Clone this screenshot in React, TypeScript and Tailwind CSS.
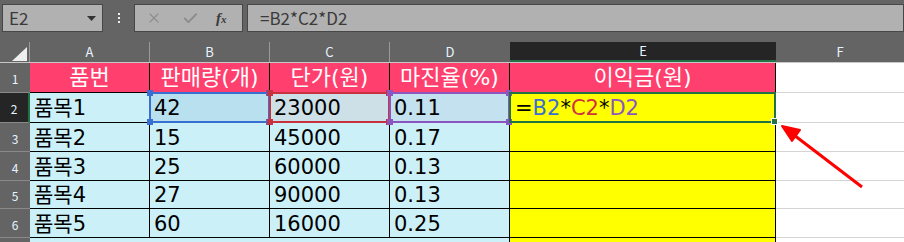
import { X, Check } from 'lucide-react';

const FONT = { fontFamily: '"Noto Sans CJK KR", "Noto Sans", sans-serif' };
const CELL_FONT = { fontFamily: '"DejaVu Sans", "Noto Sans CJK KR", sans-serif' };

const COLS = ['A', 'B', 'C', 'D', 'E', 'F'];
const HEAD = ['품번', '판매량(개)', '단가(원)', '마진율(%)', '이익금(원)'];
const ROWS = [
  ['품목1', '42', '23000', '0.11'],
  ['품목2', '15', '45000', '0.17'],
  ['품목3', '25', '60000', '0.13'],
  ['품목4', '27', '90000', '0.13'],
  ['품목5', '60', '16000', '0.25'],
];
const ROW_H = ['h-[30px]', 'h-[30px]', 'h-[29px]', 'h-[29px]', 'h-[28px]', 'h-[29px]'];

// fill for the referenced cells on row 2
const REF_FILL: Record<number, string> = { 1: 'bg-[#b9e0ef]', 2: 'bg-[#cde0e7]', 3: 'bg-[#c4e1ef]' };

function RefBox({ left, width, color }: { left: number; width: number; color: string }) {
  return (
    <div className="absolute top-[92px] h-[31px] pointer-events-none" style={{ left, width }}>
      <div className="absolute inset-0 border-2" style={{ borderColor: color }} />
      <div className="absolute -left-[2px] -top-[2px] w-[6px] h-[6px]" style={{ background: color }} />
      <div className="absolute -right-[2px] -top-[2px] w-[6px] h-[6px]" style={{ background: color }} />
      <div className="absolute -left-[2px] -bottom-[2px] w-[6px] h-[6px]" style={{ background: color }} />
      <div className="absolute -right-[2px] -bottom-[2px] w-[6px] h-[6px]" style={{ background: color }} />
    </div>
  );
}

export default function App() {
  return (
    <div className="relative w-[904px] h-[242px] overflow-hidden bg-white" style={FONT}>
      {/* ── Formula bar ─────────────────────────── */}
      <div className="h-[42px] bg-[#646464] flex items-start pt-[4px] pl-[2px]">
        <div className="w-[101px] h-[28px] bg-[#b1b1b1] border border-[#474747] flex items-center pl-[6px] pr-[6px]">
          <span className="flex-1 text-[17px] text-[#3a3a3a]">E2</span>
          <svg width="9" height="5" viewBox="0 0 9 5"><path d="M0 0h9L4.5 5z" fill="#333" /></svg>
        </div>
        <div className="w-[31px] h-[28px] flex flex-col items-center justify-center gap-[2px]">
          <div className="w-[2px] h-[2px] bg-[#eee]" />
          <div className="w-[2px] h-[2px] bg-[#eee]" />
          <div className="w-[2px] h-[2px] bg-[#eee]" />
        </div>
        <div className="w-[109px] h-[28px] bg-[#b1b1b1] border border-[#474747] flex items-center pl-[11px]">
          <X size={16} strokeWidth={1.6} className="text-[#8c8c8c]" />
          <Check size={17} strokeWidth={2.6} className="ml-[20px] text-[#8c8c8c]" />
          <span className="ml-[17px] text-[15px] italic font-bold text-[#3a3a3a]" style={{ fontFamily: '"Liberation Serif", serif' }}>
            f<span className="text-[11px]">x</span>
          </span>
        </div>
        <div className="ml-[4px] flex-1 h-[28px] bg-[#b1b1b1] border border-[#474747] flex items-center pl-[12px]">
          <span className="text-[17px] text-[#3a3a3a]">=B2*C2*D2</span>
        </div>
      </div>

      {/* ── Column headers ─────────────────────── */}
      <div className="flex h-[21px] bg-[#646464] border-b border-[#c8c8c8]">
        <div className="w-[30px] shrink-0 border-r border-[#9a9a9a] relative">
          <svg className="absolute left-[12px] top-[5px]" width="15" height="14" viewBox="0 0 15 14">
            <path d="M15 0V14H0z" fill="#efefef" />
          </svg>
        </div>
        {COLS.map((c, i) => (
          <div key={c}
            className={`flex items-center justify-center text-[13px] text-[#e8f4ff] ${
              c === 'E'
                ? 'w-[266px] bg-[#252525] border-b-2 border-[#217346]'
                : c === 'F' ? 'flex-1' : 'w-[120px] border-r border-[#9a9a9a]'
            } ${i === 3 ? 'border-r-0' : ''}`}>
            {c}
          </div>
        ))}
      </div>

      {/* ── Grid body ──────────────────────────── */}
      {[0, 1, 2, 3, 4, 5].map(r => (
        <div key={r} className={`flex ${ROW_H[r]}`}>
          <div className={`w-[30px] shrink-0 flex items-center justify-center pt-[3px] text-[12px] text-[#e8f4ff] border-b border-[#8a8a8a] ${
            r === 1 ? 'bg-[#252525] border-r-2 border-r-[#217346]' : 'bg-[#646464]'
          }`}>
            {r + 1}
          </div>
          {r === 0
            ? HEAD.map((h, i) => (
              <div key={h} style={CELL_FONT}
                className={`${i === 4 ? 'w-[266px]' : 'w-[120px]'} bg-[#ff3f6e] border-r border-b border-black flex items-center justify-center text-white text-[22px]`}>
                {h}
              </div>
            ))
            : (
              <>
                {ROWS[r - 1].map((v, i) => (
                  <div key={i} style={CELL_FONT}
                    className={`w-[120px] border-r border-b border-black flex items-center pl-[4px] pt-[3px] text-[21px] text-black ${
                      r === 1 && REF_FILL[i] ? REF_FILL[i] : 'bg-[#ccf0f8]'
                    }`}>
                    {v}
                  </div>
                ))}
                <div style={CELL_FONT} className="w-[266px] bg-[#ffff00] border-r border-b border-black flex items-center pl-[5px] pt-[2px] text-[21px]">
                  {r === 1 && (
                    <span>
                      =<span className="text-[#3a6fd2]">B2</span>*<span className="text-[#cc3241]">C2</span>*<span className="text-[#8a57c0]">D2</span>
                    </span>
                  )}
                </div>
              </>
            )}
          <div className="flex-1 bg-white border-b border-[#d4d4d4]" />
        </div>
      ))}
      <div className="flex h-[10px]">
        <div className="w-[30px] bg-[#646464]" />
        <div className="w-[480px] bg-[#ccf0f8] border-r border-black" />
        <div className="w-[266px] bg-[#ffff00] border-r border-black" />
      </div>

      {/* ── Reference outlines (B2, C2, D2) ───── */}
      <RefBox left={149} width={121} color="#3a6fd2" />
      <RefBox left={269} width={121} color="#c8323f" />
      <RefBox left={389} width={121} color="#8a57c0" />

      {/* ── Active cell E2 ─────────────────────── */}
      <div className="absolute left-[509px] top-[92px] w-[267px] h-[31px] border-2 border-[#217346] pointer-events-none">
        <div className="absolute -right-[4px] -bottom-[4px] w-[7px] h-[7px] bg-[#217346] border border-white" />
      </div>

      {/* ── Annotation arrow ──────────────────── */}
      <svg className="absolute left-0 top-0 pointer-events-none" width="904" height="242">
        <line x1="862" y1="187" x2="790" y2="132" stroke="#ff0000" strokeWidth="3" />
        <path d="M782 126 L800 130 L792 141 Z" fill="#ff0000" stroke="#ff0000" strokeWidth="2" strokeLinejoin="round" />
      </svg>
    </div>
  );
}
